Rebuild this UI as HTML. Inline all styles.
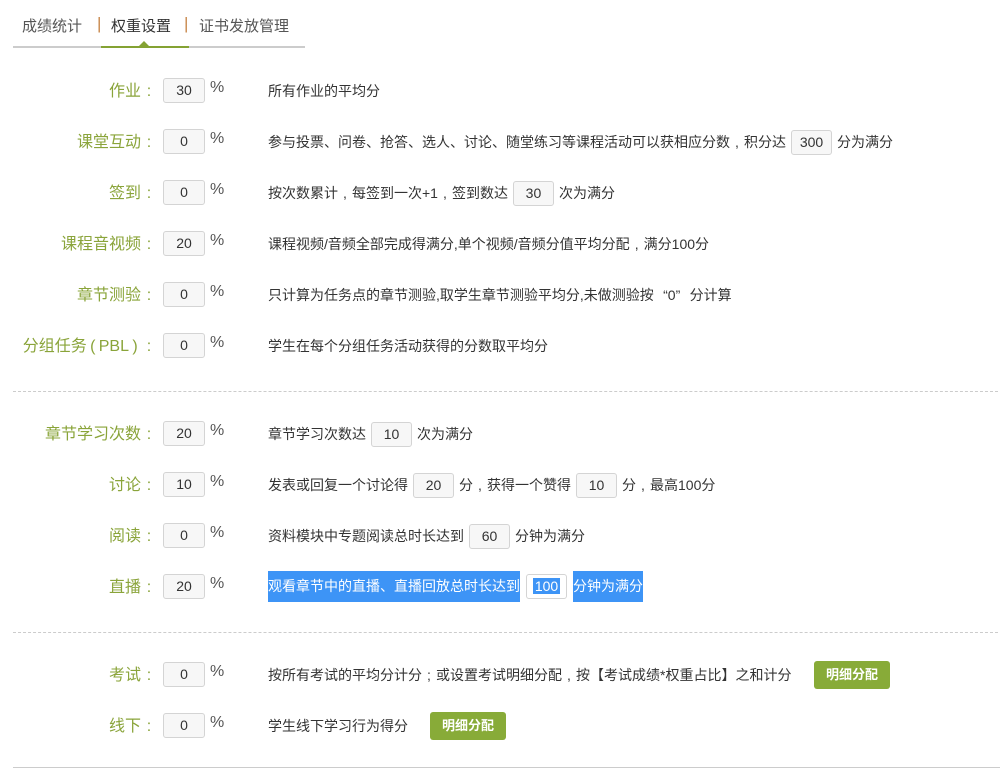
<!DOCTYPE html>
<html><head><meta charset="utf-8"><style>
*{margin:0;padding:0;box-sizing:border-box}
body{width:1000px;height:776px;background:#fff;font-family:"Liberation Sans","Noto Sans CJK SC",sans-serif;color:#333;position:relative;overflow:hidden}
.tabs{position:absolute;left:13px;top:0;width:292px;height:48px;border-bottom:2px solid #ccc}
.tabs span{position:absolute;top:15px;font-size:15px;color:#555}
.tabs .sep{color:#c8874a;top:14px;font-size:17px}
.act{position:absolute;left:88px;width:88px;bottom:-2px;height:2px;background:#84a233}
.tri{position:absolute;left:126px;bottom:0;width:0;height:0;border-left:5px solid transparent;border-right:5px solid transparent;border-bottom:5px solid #84a233}
.row{position:absolute;left:0;height:26px;width:1000px}
.lab{position:absolute;right:843px;top:-1px;font-size:16px;color:#8aa43a;white-space:nowrap}
.c{display:inline-block;width:16px;text-align:center}
.cp{display:inline-block;width:12px;text-align:center}
.p{display:inline-block;width:14px;text-align:center}
.pl{display:inline-block;width:14px;text-align:left}
.pr{display:inline-block;width:14px;text-align:right}
.box{display:inline-block;width:42px;height:25px;border:1px solid #d4d4d4;border-radius:3px;background:#f7f7f7;font-size:14px;text-align:center;line-height:23px;color:#333;vertical-align:middle}
.r1{position:absolute;left:163px;top:0}
.pct{position:absolute;left:210px;top:1px;font-size:16px;color:#555}
.desc{position:absolute;left:268px;top:0;font-size:14px;line-height:26px;white-space:nowrap;color:#333}
.desc .box{margin:0 5px 2px 5px;width:41px}
.dash{position:absolute;left:13px;width:985px;border-top:1px dashed #ccc}
.btn{display:inline-block;background:#88ab38;color:#fff;font-size:13px;font-weight:bold;border-radius:3px;width:76px;height:28px;line-height:28px;text-align:center;vertical-align:middle}
.hl{background:#3d94f6;color:#fff;display:inline-block;height:31px;line-height:31px;vertical-align:middle}
</style></head><body>
<div class="tabs">
<span style="left:9px">成绩统计</span><span class="sep" style="left:84px">|</span>
<span style="left:98px;color:#333">权重设置</span><span class="sep" style="left:171px">|</span>
<span style="left:186px">证书发放管理</span>
<div class="act"></div><div class="tri"></div>
</div>

<div class="row" style="top:78px"><span class="lab">作业<span class="c">:</span></span><span class="box r1">30</span><span class="pct">%</span><span class="desc">所有作业的平均分</span></div>
<div class="row" style="top:129px"><span class="lab">课堂互动<span class="c">:</span></span><span class="box r1">0</span><span class="pct">%</span><span class="desc">参与投票、问卷、抢答、选人、讨论、随堂练习等课程活动可以获相应分数<span class="p">,</span>积分达<span class="box">300</span>分为满分</span></div>
<div class="row" style="top:180px"><span class="lab">签到<span class="c">:</span></span><span class="box r1">0</span><span class="pct">%</span><span class="desc">按次数累计<span class="p">,</span>每签到一次+1<span class="p">,</span>签到数达<span class="box">30</span>次为满分</span></div>
<div class="row" style="top:231px"><span class="lab">课程音视频<span class="c">:</span></span><span class="box r1">20</span><span class="pct">%</span><span class="desc">课程视频/音频全部完成得满分,单个视频/音频分值平均分配<span class="p">,</span>满分100分</span></div>
<div class="row" style="top:282px"><span class="lab">章节测验<span class="c">:</span></span><span class="box r1">0</span><span class="pct">%</span><span class="desc">只计算为任务点的章节测验,取学生章节测验平均分,未做测验按<span class="pr">“</span>0<span class="pl">”</span>分计算</span></div>
<div class="row" style="top:333px"><span class="lab">分组任务<span class="cp">(</span>PBL<span class="cp">)</span><span class="c">:</span></span><span class="box r1">0</span><span class="pct">%</span><span class="desc">学生在每个分组任务活动获得的分数取平均分</span></div>

<div class="dash" style="top:391px"></div>

<div class="row" style="top:421px"><span class="lab">章节学习次数<span class="c">:</span></span><span class="box r1">20</span><span class="pct">%</span><span class="desc">章节学习次数达<span class="box">10</span>次为满分</span></div>
<div class="row" style="top:472px"><span class="lab">讨论<span class="c">:</span></span><span class="box r1">10</span><span class="pct">%</span><span class="desc">发表或回复一个讨论得<span class="box">20</span>分<span class="p">,</span>获得一个赞得<span class="box">10</span>分<span class="p">,</span>最高100分</span></div>
<div class="row" style="top:523px"><span class="lab">阅读<span class="c">:</span></span><span class="box r1">0</span><span class="pct">%</span><span class="desc">资料模块中专题阅读总时长达到<span class="box">60</span>分钟为满分</span></div>
<div class="row" style="top:574px"><span class="lab">直播<span class="c">:</span></span><span class="box r1">20</span><span class="pct">%</span><span class="desc" style="top:-3px"><span class="hl">观看章节中的直播、直播回放总时长达到</span><span class="box" style="margin:0 6px 0 6px;width:41px;background:#fff"><span style="background:#3d94f6;color:#fff;padding:0 2px">100</span></span><span class="hl">分钟为满分</span></span></div>

<div class="dash" style="top:632px"></div>

<div class="row" style="top:662px"><span class="lab">考试<span class="c">:</span></span><span class="box r1">0</span><span class="pct">%</span><span class="desc">按所有考试的平均分计分<span class="p">;</span>或设置考试明细分配<span class="p">,</span>按<span class="pr">【</span>考试成绩*权重占比<span class="pl">】</span>之和计分</span><span class="btn" style="position:absolute;left:814px;top:-1px">明细分配</span></div>
<div class="row" style="top:713px"><span class="lab">线下<span class="c">:</span></span><span class="box r1">0</span><span class="pct">%</span><span class="desc">学生线下学习行为得分</span><span class="btn" style="position:absolute;left:430px;top:-1px">明细分配</span></div>

<div style="position:absolute;left:13px;top:767px;width:987px;border-top:1px solid #ccc"></div>
</body></html>
